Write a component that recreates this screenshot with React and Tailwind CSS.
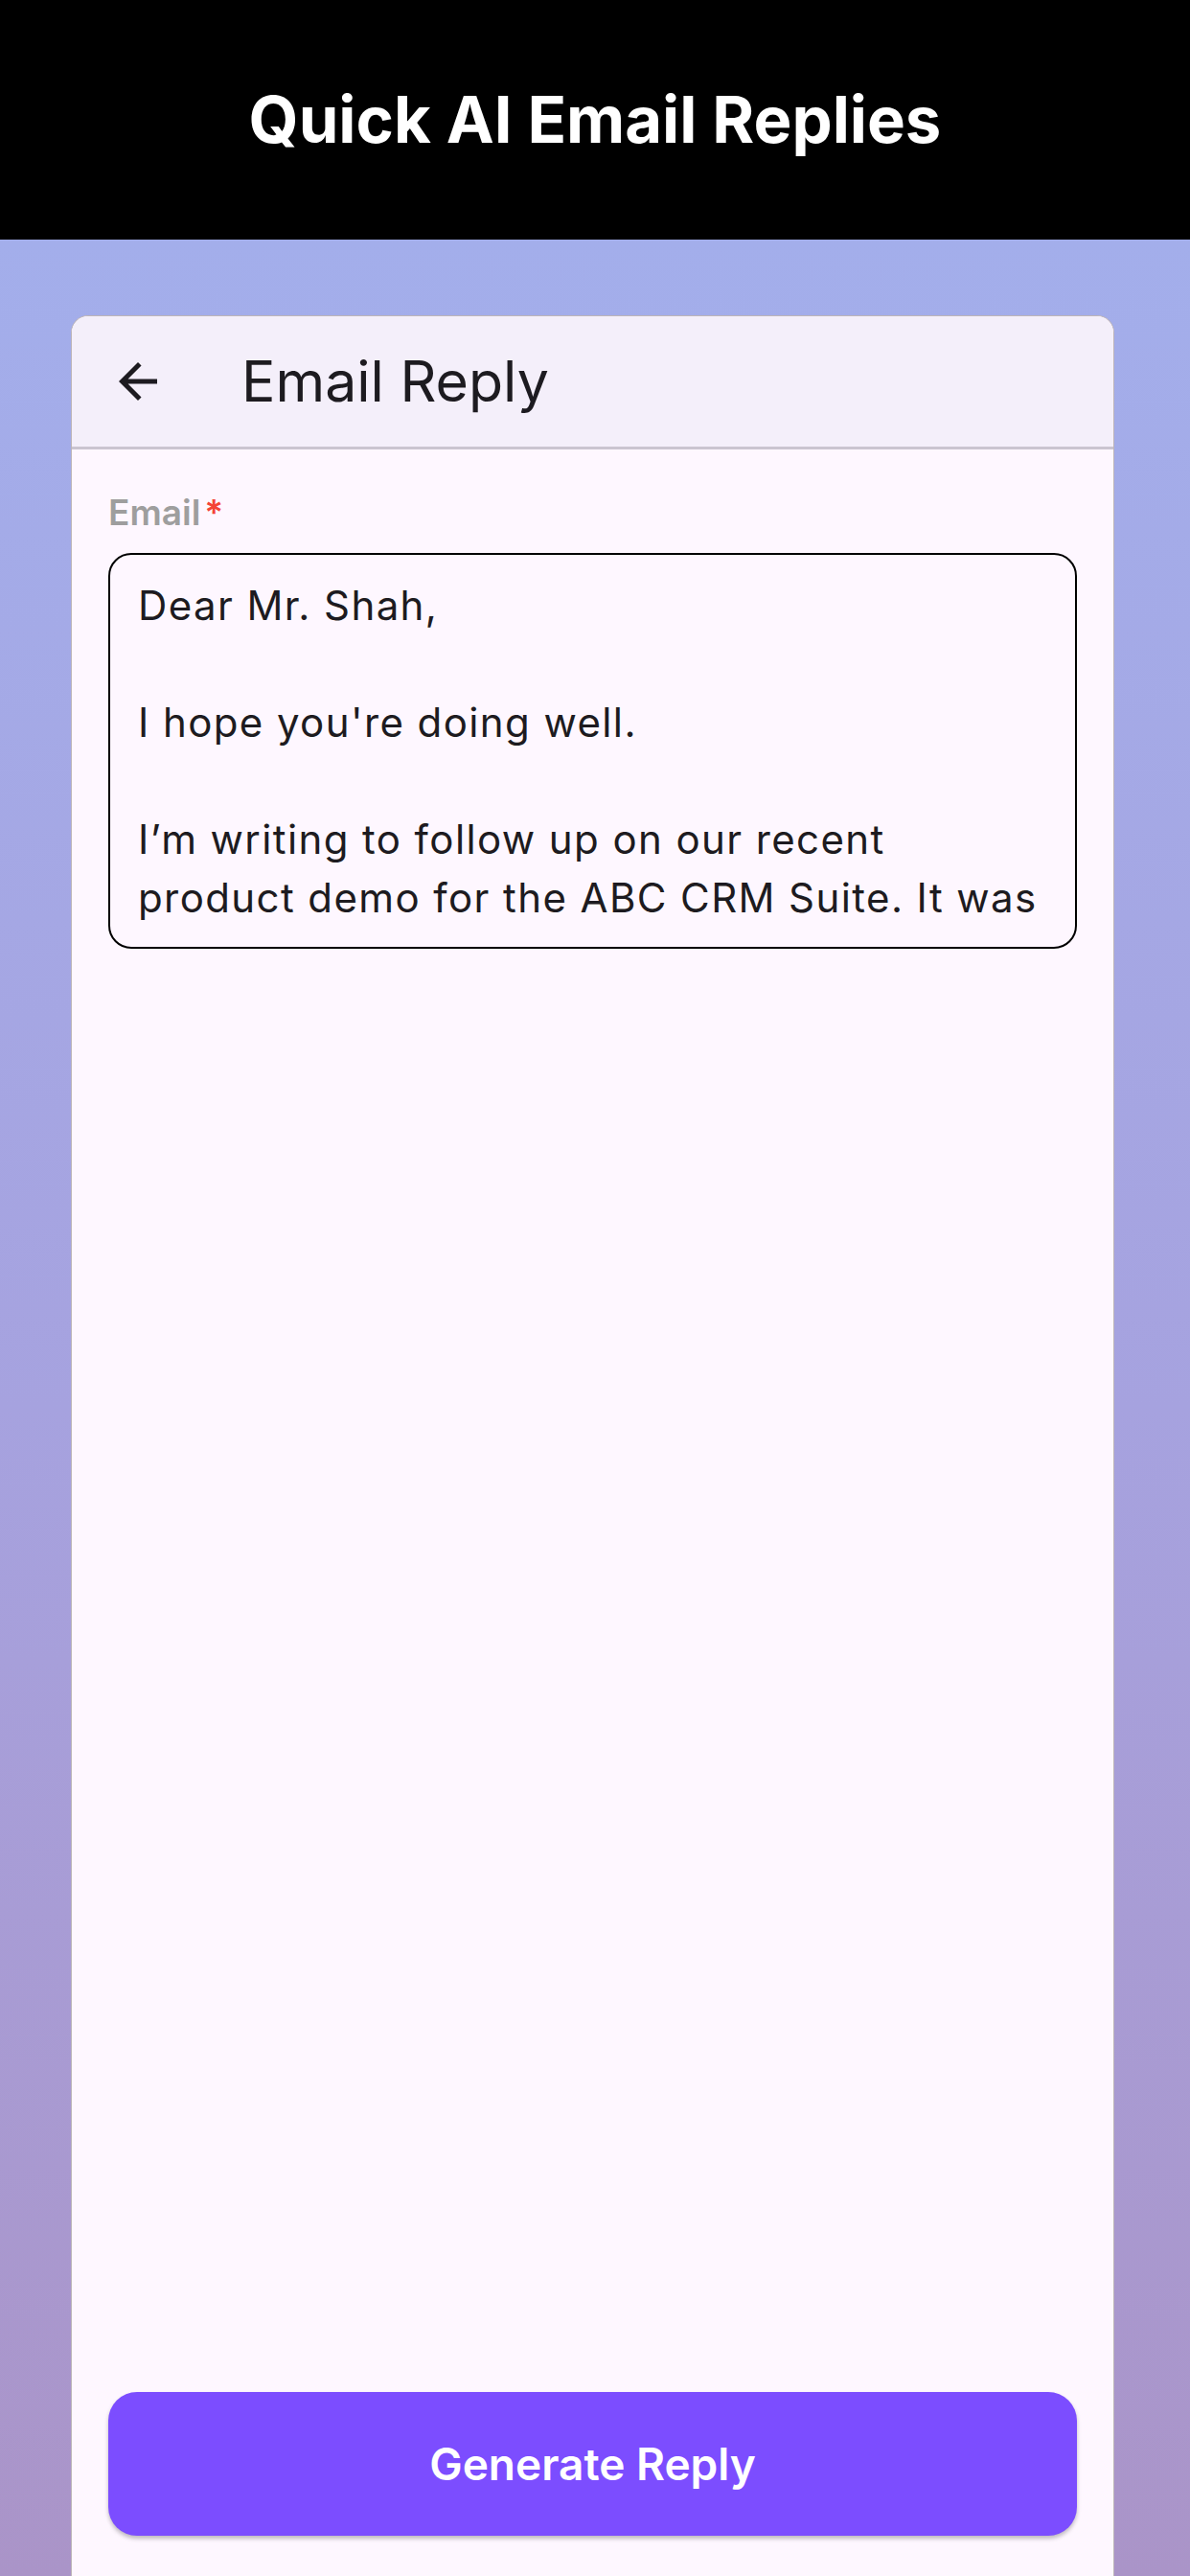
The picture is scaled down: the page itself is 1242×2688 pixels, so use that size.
const font = { fontFamily: 'Inter, "Noto Sans", sans-serif' }

function BackArrow() {
  // Material arrow_back
  return (
    <svg viewBox="0 0 24 24" className="w-[60px] h-[60px] text-[#1d1b20]" fill="currentColor">
      <path d="M20 11H7.83l5.59-5.59L12 4l-8 8 8 8 1.41-1.41L7.83 13H20v-2z" />
    </svg>
  )
}

export default function App() {
  return (
    <div className="h-[2688px] w-[1242px] flex flex-col overflow-hidden" style={font}>
      {/* top bar */}
      <header className="h-[250px] shrink-0 bg-black flex items-center justify-center">
        <h1 className="text-white text-[67px] font-bold tracking-[0px]">Quick AI Email Replies</h1>
      </header>

      {/* gradient page */}
      <main className="flex-1 flex flex-col bg-gradient-to-b from-[#a3aeeb] via-[#a6a2df] to-[#aa94c8] pt-[79px]">
        <section className="ml-[74px] w-[1089px] flex-1 flex flex-col rounded-t-[18px] bg-[#fef7ff] border border-b-0 border-[#bdb5b8] overflow-hidden">
          {/* app bar */}
          <div className="h-[139px] shrink-0 bg-[#f4effa] border-b-[3px] border-[#cac4d0] flex items-center pl-[39px] gap-[78px]">
            <BackArrow />
            <h2 className="text-[59px] text-[#1d1b20] font-normal">Email Reply</h2>
          </div>

          {/* form */}
          <div className="flex-1 flex flex-col px-[38px] pt-[44px] pb-[42px]">
            <label className="text-[37px] leading-[44px] font-semibold text-[#9e9e9e] flex">
              Email<span className="text-[#f44336] ml-[4px]">*</span>
            </label>

            <div className="mt-[20px] h-[413px] border-[2.5px] border-black rounded-[24px] px-[29px] pt-[22px] overflow-hidden">
              <p className="text-[42px] leading-[61px] tracking-[1.4px] text-[#1d1b20]">
                Dear Mr. Shah,
                <br />
                <br />
                I hope you're doing well.
                <br />
                <br />
                I’m writing to follow up on our recent
                <br />
                product demo for the ABC CRM Suite. It was
              </p>
            </div>

            <button className="mt-auto h-[150px] w-full rounded-[30px] bg-[#7c4dff] text-white text-[46px] font-semibold shadow-[0_3px_4px_rgba(0,0,0,0.25)]">
              Generate Reply
            </button>
          </div>
        </section>
      </main>
    </div>
  )
}
